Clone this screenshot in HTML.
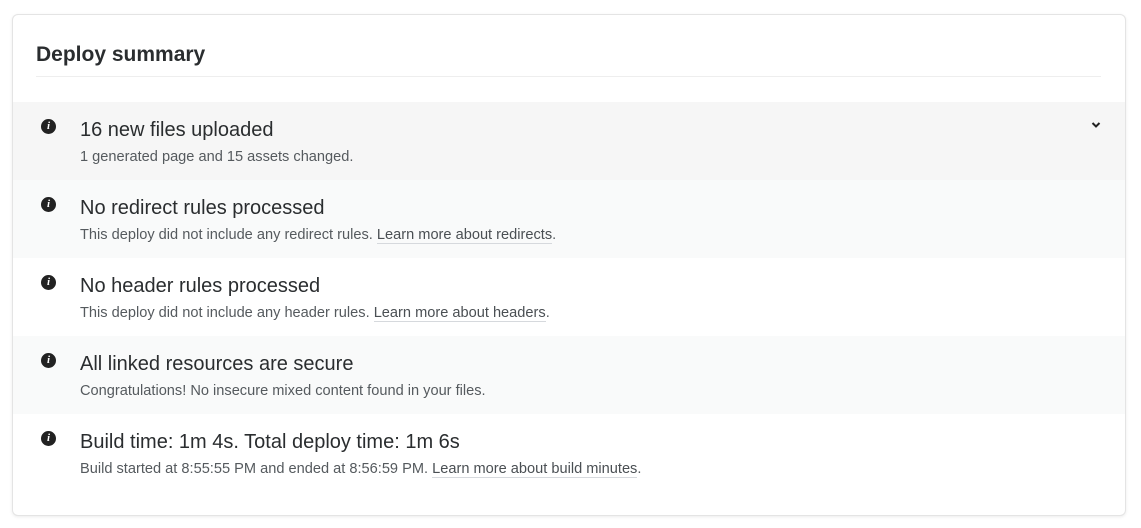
<!DOCTYPE html><html><head><style>
body{margin:0;background:#fff;font-family:"Liberation Sans",sans-serif;width:1141px;height:528px;position:relative;overflow:hidden}
.card{position:absolute;left:12px;top:14px;width:1112px;height:500px;border:1px solid #e4e4e4;border-radius:6px;box-shadow:0 1px 3px rgba(0,0,0,.08);background:#fff;overflow:hidden}
h2{position:absolute;left:23px;top:28px;margin:0;font-size:21px;font-weight:600;color:#2a2d2f}
.hr{position:absolute;left:23px;top:61px;width:1065px;height:1px;background:#eeeeee}
.row{position:absolute;left:0;width:1112px;height:78px}
.ic{position:absolute;left:28px;top:17px;width:15px;height:15px;border-radius:50%;background:#222;color:#fff;font:bold italic 11px "Liberation Serif",serif;text-align:center;line-height:15px}
.t{position:absolute;left:67px;top:17px;font-size:20px;color:#2a2d2f}
.s{position:absolute;left:67px;top:47px;font-size:14.6px;color:#555a5e;white-space:nowrap}
.s a{color:#4a4f53;text-decoration:none;border-bottom:1px solid #d6d9dd}
.chev{position:absolute;right:24px;top:19px}
</style></head><body><div class="card">
<h2>Deploy summary</h2><div class="hr"></div>
<div class="row" style="top:87px;background:#f6f6f6"><div class="ic">i</div><div class="t">16 new files uploaded</div><div class="s">1 generated page and 15 assets changed.</div>
<svg class="chev" width="10" height="8" viewBox="0 0 10 8"><path d="M1.5 2l3.5 3.5L8.5 2" stroke="#222" stroke-width="2" fill="none"/></svg></div>
<div class="row" style="top:165px;background:#f9fafa"><div class="ic">i</div><div class="t">No redirect rules processed</div><div class="s">This deploy did not include any redirect rules. <a>Learn more about redirects</a>.</div></div>
<div class="row" style="top:243px"><div class="ic">i</div><div class="t">No header rules processed</div><div class="s">This deploy did not include any header rules. <a>Learn more about headers</a>.</div></div>
<div class="row" style="top:321px;background:#f9fafa"><div class="ic">i</div><div class="t">All linked resources are secure</div><div class="s">Congratulations! No insecure mixed content found in your files.</div></div>
<div class="row" style="top:399px"><div class="ic">i</div><div class="t">Build time: 1m 4s. Total deploy time: 1m 6s</div><div class="s">Build started at 8:55:55 PM and ended at 8:56:59 PM. <a>Learn more about build minutes</a>.</div></div>
</div></body></html>
